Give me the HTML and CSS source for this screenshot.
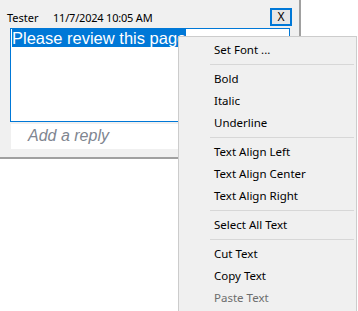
FILE: index.html
```html
<!DOCTYPE html>
<html>
<head>
<meta charset="utf-8">
<link rel="stylesheet" href="styles.css">
</head>
<body>
<div class="note">
  <div class="head">
    <span class="author">Tester</span>
    <span class="date">11/7/2024 10:05 AM</span>
    <span class="close">X</span>
  </div>
  <div class="editor"><span class="sel">Please review this page</span></div>
  <div class="reply">Add a reply</div>
</div>
<div class="menu">
  <div class="item">Set Font ...</div>
  <div class="sep"></div>
  <div class="item">Bold</div>
  <div class="item">Italic</div>
  <div class="item">Underline</div>
  <div class="sep"></div>
  <div class="item">Text Align Left</div>
  <div class="item">Text Align Center</div>
  <div class="item">Text Align Right</div>
  <div class="sep"></div>
  <div class="item">Select All Text</div>
  <div class="sep"></div>
  <div class="item">Cut Text</div>
  <div class="item">Copy Text</div>
  <div class="item disabled">Paste Text</div>
</div>
</body>
</html>
```
FILE: styles.css
```css
html, body {
  margin: 0;
  padding: 0;
  background: #ffffff;
}
body {
  position: relative;
  width: 358px;
  height: 311px;
  overflow: hidden;
  font-family: "Noto Sans", "Open Sans", sans-serif;
}
.note {
  box-sizing: border-box;
  width: 301px;
  height: 159px;
  background: #f0f0f0;
  border-right: 2px solid #a0a0a0;
  border-bottom: 2px solid #a0a0a0;
  padding: 8px 0 0 0;
}
.head {
  display: flex;
  align-items: center;
  height: 18px;
  font-size: 11px;
  color: #000;
}
.author {
  margin-left: 7px;
  width: 46px;
}
.date {
  flex: 1;
  letter-spacing: -0.2px;
}
.close {
  box-sizing: border-box;
  width: 22px;
  height: 18px;
  margin-right: 7px;
  border: 2px solid #0078d7;
  background: #e6e6e6;
  display: flex;
  align-items: center;
  justify-content: center;
  font-size: 12px;
  line-height: 1;
}
.editor {
  box-sizing: border-box;
  margin: 2px 0 0 10px;
  width: 280px;
  height: 94px;
  border: 1px solid #0078d7;
  background: #fff;
  padding: 0 0 0 1px;
  font-family: "Liberation Sans", Arial, sans-serif;
  font-size: 16.5px;
  line-height: 19px;
}
.sel {
  background: #0078d7;
  color: #fff;
}
.reply {
  box-sizing: border-box;
  margin: 2px 0 0 11px;
  width: 278px;
  height: 25px;
  background: #fff;
  padding-left: 17px;
  font-family: "Liberation Sans", Arial, sans-serif;
  font-style: italic;
  font-size: 16px;
  line-height: 23px;
  color: #7f8690;
}
.menu {
  position: absolute;
  left: 178px;
  top: 36px;
  box-sizing: border-box;
  width: 179px;
  height: 280px;
  background: #f0f0f0;
  border: 1px solid #cccccc;
  padding: 2px 2px;
  font-size: 11.5px;
  color: #000;
}
.item {
  height: 22px;
  line-height: 22px;
  padding-left: 33px;
  white-space: nowrap;
}
.item.disabled {
  color: #6d6d6d;
}
.sep {
  height: 1px;
  margin: 3px 0 3px 29px;
  background: #d7d7d7;
}
```
